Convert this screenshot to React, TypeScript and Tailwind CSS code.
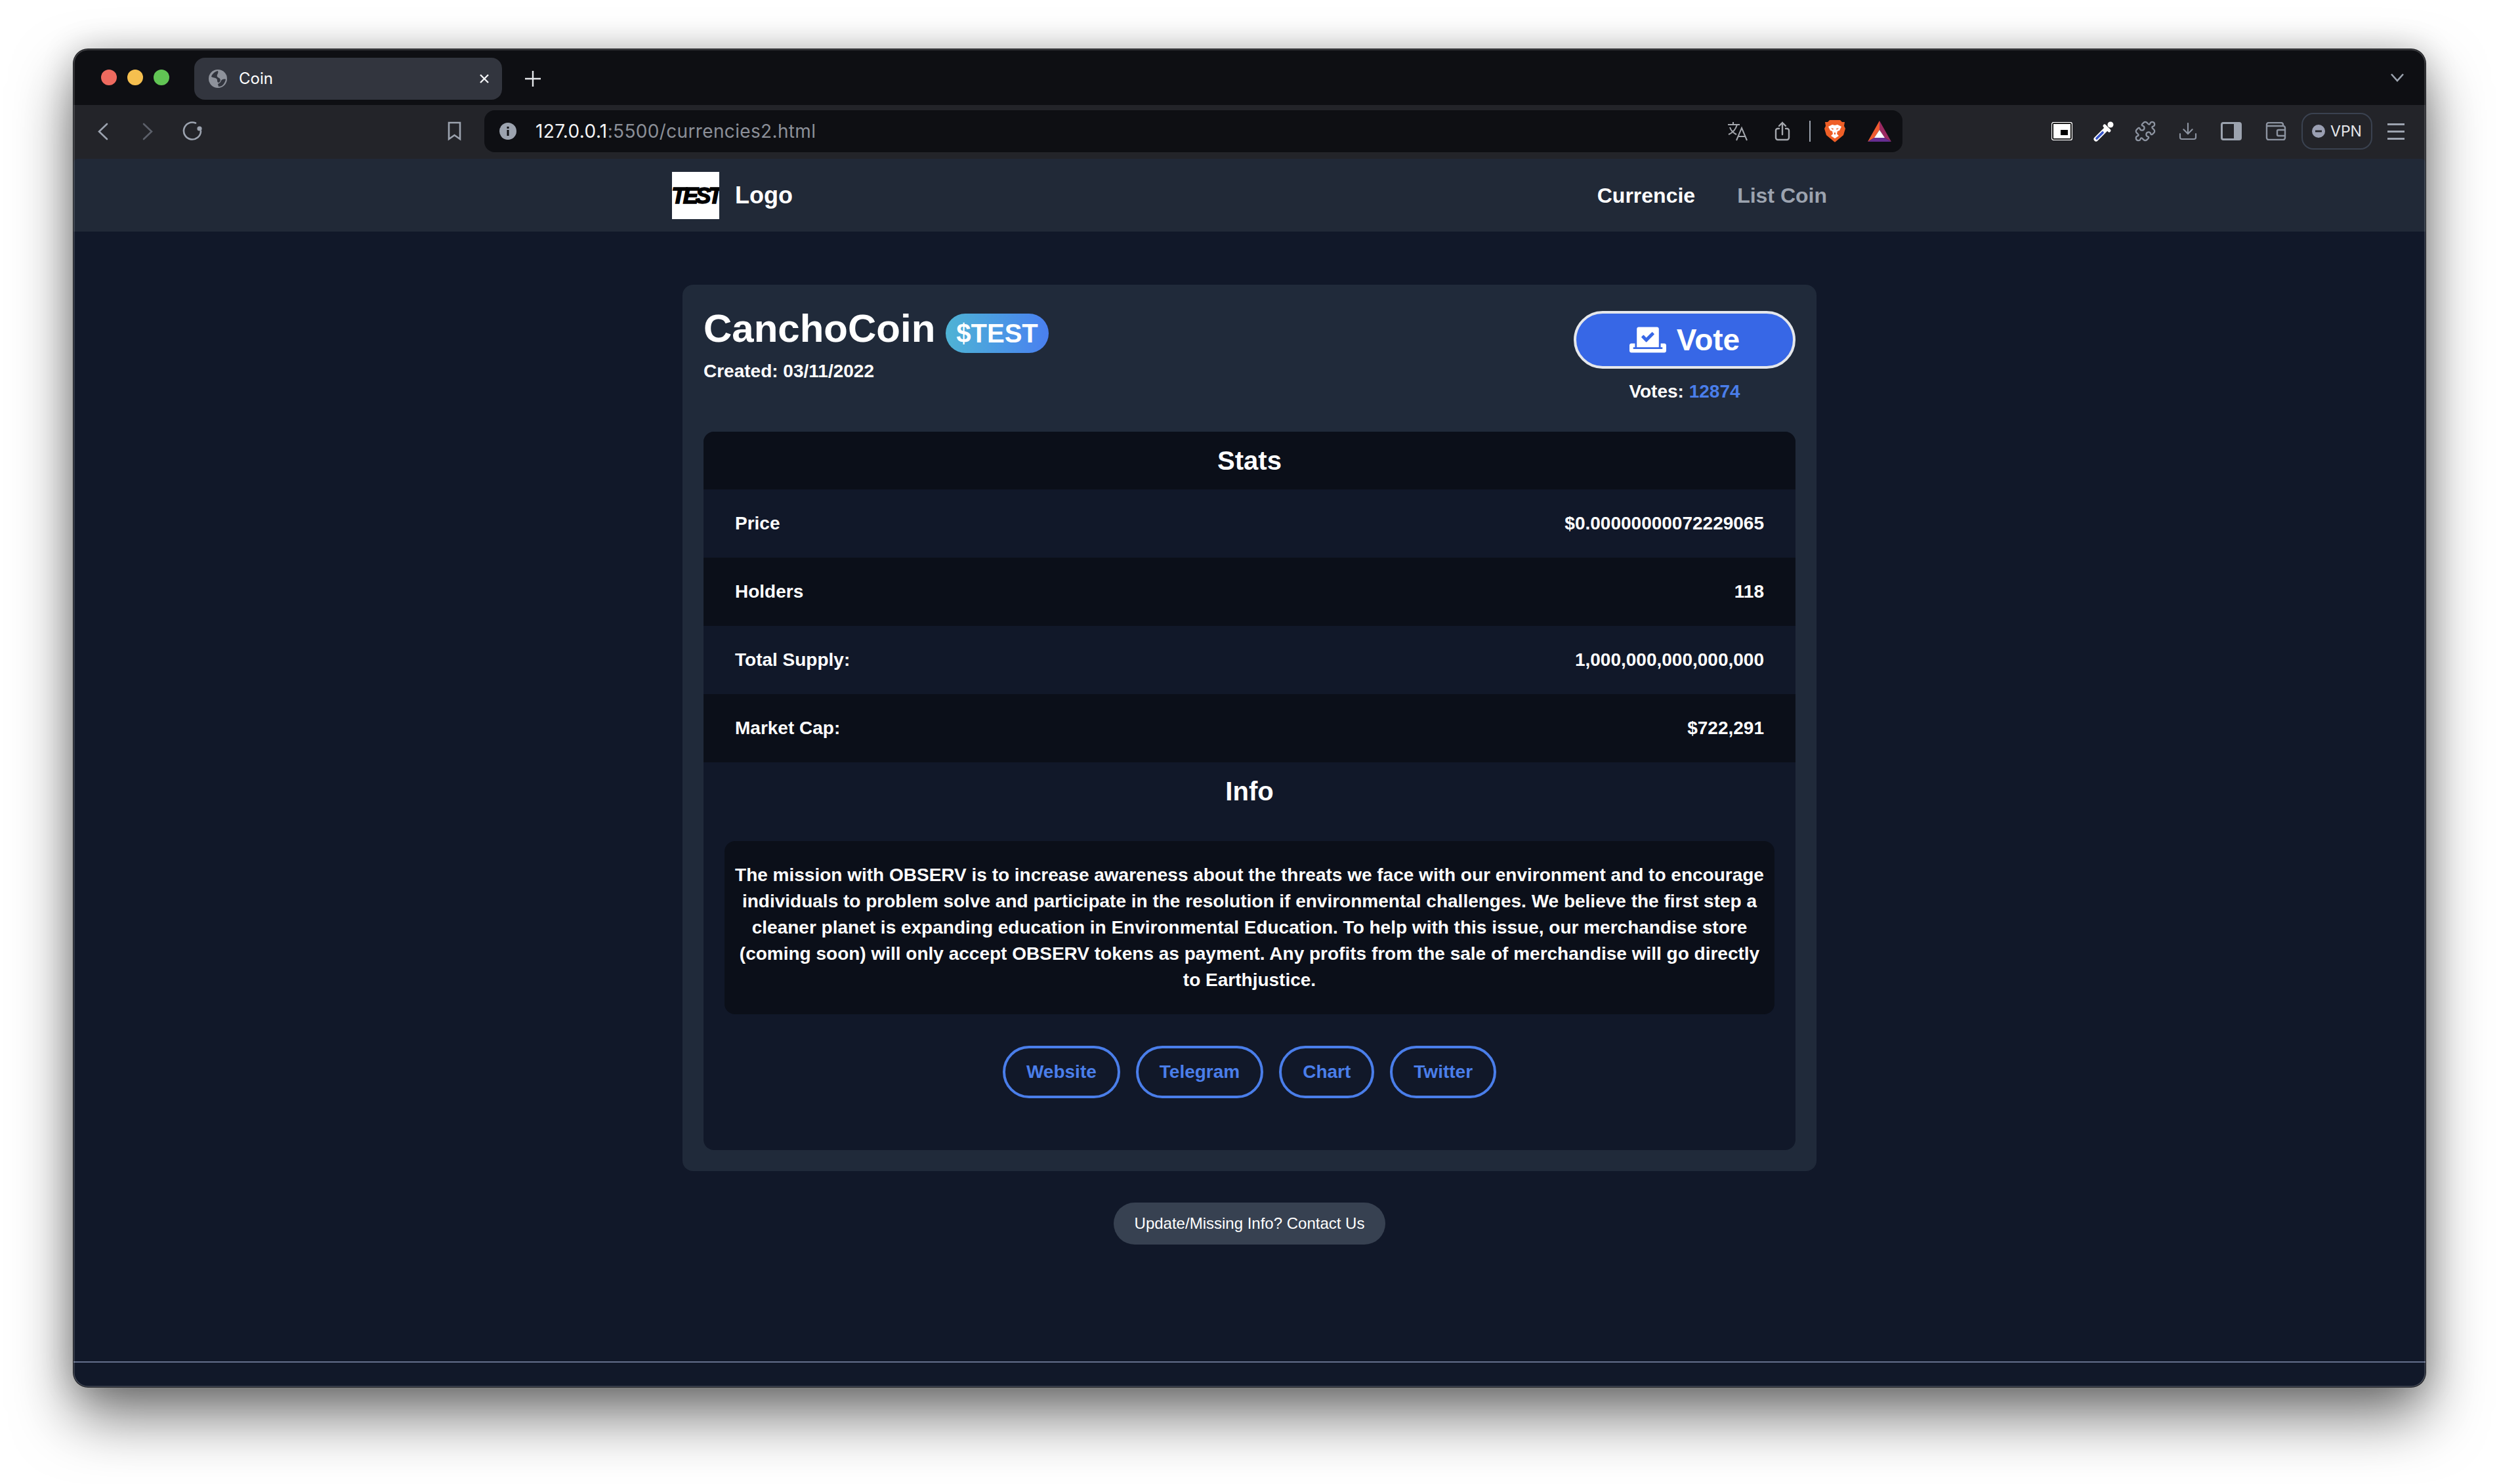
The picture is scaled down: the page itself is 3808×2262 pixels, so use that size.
import { Puzzle, Download } from 'lucide-react';
import { FaVoteYea } from 'react-icons/fa';

const stats = [
  { label: 'Price', value: '$0.00000000072229065', dark: false },
  { label: 'Holders', value: '118', dark: true },
  { label: 'Total Supply:', value: '1,000,000,000,000,000', dark: false },
  { label: 'Market Cap:', value: '$722,291', dark: true },
];

const links = ['Website', 'Telegram', 'Chart', 'Twitter'];

function TabBar() {
  return (
    <div className="flex h-[85px] shrink-0 items-center bg-[#0e0f13] pl-[42px] pr-[32px]">
      <div className="flex gap-4">
        <div className="h-6 w-6 rounded-full bg-[#ee6a5f]" />
        <div className="h-6 w-6 rounded-full bg-[#f5bf4f]" />
        <div className="h-6 w-6 rounded-full bg-[#61c554]" />
      </div>
      <div className="ml-[38px] mt-[5px] flex h-16 w-[469px] items-center rounded-2xl bg-[#32353e] pl-[22px] pr-[20px]">
        <svg width="28" height="28" viewBox="0 0 28 28">
          <circle cx="14" cy="14" r="14" fill="#8e929b" />
          <path d="M14 2c-5 1-9 5-10 9 3 2 6 1 8 3 2 2 0 5 3 6 3-1 4-5 1-7-2-1-4-2-3-5 1-2 2-4 1-6z" fill="#32353e" />
          <path d="M26 15c-3-1-6 0-7 2-1 3-3 4-5 5l1 4c5 0 9-3 11-11z" fill="#32353e" />
        </svg>
        <span className="ml-[18px] font-['Inter',sans-serif] text-2xl leading-none text-white">Coin</span>
        <svg className="ml-auto" width="14" height="14" viewBox="0 0 14 14" stroke="#f3f4f6" strokeWidth="2.4">
          <path d="M1 1l12 12M13 1L1 13" />
        </svg>
      </div>
      <svg className="ml-[35px] mt-1" width="24" height="24" viewBox="0 0 24 24" stroke="#e5e7eb" strokeWidth="2.4">
        <path d="M12 0v24M0 12h24" />
      </svg>
      <svg className="ml-auto" width="22" height="14" viewBox="0 0 22 14" fill="none" stroke="#9ca3af" strokeWidth="2.6">
        <path d="M2 2l9 10 9-10" />
      </svg>
    </div>
  );
}

function AddressBar() {
  return (
    <div className="ml-[35px] flex h-16 w-[2161px] items-center rounded-2xl bg-[#0e0f13] pl-[23px] pr-[17px]">
      <svg width="26" height="26" viewBox="0 0 26 26">
        <circle cx="13" cy="13" r="13" fill="#9ca3af" />
        <rect x="11.5" y="11" width="3" height="9" fill="#0e0f13" />
        <rect x="11.5" y="6" width="3" height="3" fill="#0e0f13" />
      </svg>
      <span className="ml-[29px] font-['Inter',sans-serif] text-[28px] leading-none tracking-[0.35px] text-[#8b8f98]">
        <span className="text-[#f3f4f6]">127.0.0.1</span>:5500/currencies2.html
      </span>
      <svg className="ml-auto" width="32" height="30" viewBox="0 0 32 30" fill="none" stroke="#a4a7ad" strokeWidth="2">
        <path d="M9 1v3M1 5h18M15 5c-2 7-6 12-13 15M4 9c2 6 6 9 10 11M14 29l8-19 8 19M17 23h10" />
      </svg>
      <svg className="ml-10" width="24" height="30" viewBox="0 0 24 30" fill="none" stroke="#a4a7ad" strokeWidth="2.4" strokeLinecap="round">
        <path d="M7 11H5a3 3 0 0 0-3 3v11a3 3 0 0 0 3 3h14a3 3 0 0 0 3-3V14a3 3 0 0 0-3-3h-2M12 20V2M7 7l5-5 5 5" />
      </svg>
      <div className="ml-[29px] h-8 w-0.5 bg-[#9ca3af]" />
      <svg className="ml-[21px]" width="32" height="36" viewBox="0 0 32 36">
        <path d="M8 1h16l3 3h4l-1 6 2 4-3 10-12 10q-1 1-2 0L3 24 0 14l2-4-1-6h4z" fill="#ef5f27" />
        <path d="M6 11l6-3 4 1 4-1 6 3-3 6-3 1-1 4 3 3-6 4-6-4 3-3-1-4-3-1z" fill="#fff" />
        <path d="M10 13l4 1-1 2zM22 13l-4 1 1 2zM15 20h2v3h-2z" fill="#ef5f27" />
      </svg>
      <svg className="ml-[34px]" width="36" height="32" viewBox="0 0 36 32">
        <path d="M18 0L0 32l10-6 8-12z" fill="#ef5a30" />
        <path d="M18 0l18 32-10-6-8-12z" fill="#9c2a62" />
        <path d="M0 32h36l-10-6H10z" fill="#662d91" />
        <path d="M18 14l8 12H10z" fill="#fff" />
      </svg>
    </div>
  );
}

function Toolbar() {
  return (
    <div className="flex h-[82px] shrink-0 items-center bg-[#232429] pb-[2px]">
      <svg className="ml-[37px]" width="16" height="27" viewBox="0 0 16 27" fill="none" stroke="#9ca3af" strokeWidth="2.6" strokeLinecap="round">
        <path d="M14 2L2 13.5 14 25" />
      </svg>
      <svg className="ml-[52px]" width="16" height="27" viewBox="0 0 16 27" fill="none" stroke="#5c606a" strokeWidth="2.6" strokeLinecap="round">
        <path d="M2 2l12 11.5L2 25" />
      </svg>
      <svg className="ml-[45px]" width="30" height="30" viewBox="0 0 30 30" fill="none" stroke="#9ca3af" strokeWidth="2.6" strokeLinecap="round">
        <path d="M20 2.5A13 13 0 1 0 28 15" />
        <circle cx="26" cy="11" r="3.6" fill="#9ca3af" stroke="none" />
      </svg>
      <svg className="ml-[374px]" width="21" height="30" viewBox="0 0 21 30" fill="none" stroke="#9ca3af" strokeWidth="2.6">
        <path d="M2 2h17v25l-8.5-6L2 27z" />
      </svg>
      <AddressBar />
      <svg className="ml-[227px]" width="32" height="28" viewBox="0 0 32 28">
        <rect x="0.5" y="0.5" width="31" height="27" rx="3" fill="#000" stroke="#fff" strokeWidth="1.4" />
        <rect x="3" y="3" width="26" height="22" fill="#fff" />
        <rect x="14" y="12" width="11" height="8" fill="#000" />
      </svg>
      <svg className="ml-8" width="32" height="32" viewBox="0 0 32 32" fill="none" strokeLinecap="round">
        <path d="M4 28L19 13" stroke="#fff" strokeWidth="7" />
        <path d="M5 27l9-9" stroke="#3554c9" strokeWidth="3.6" />
        <path d="M17 8l7 7" stroke="#fff" strokeWidth="5" />
        <circle cx="26" cy="6" r="4.5" fill="#fff" />
      </svg>
      <Puzzle className="ml-[30px]" size={34} color="#8d94a1" strokeWidth={1.6} />
      <Download className="ml-[32px]" size={32} color="#8d94a1" strokeWidth={1.6} />
      <svg className="ml-[34px]" width="32" height="28" viewBox="0 0 32 28">
        <rect x="1.5" y="1.5" width="29" height="25" rx="2.5" fill="#232429" stroke="#9ca3af" strokeWidth="3" />
        <rect x="20" y="1.5" width="10.5" height="25" fill="#9ca3af" />
      </svg>
      <svg className="ml-[36px]" width="32" height="28" viewBox="0 0 32 28" fill="none" stroke="#8d94a1" strokeWidth="2.4">
        <path d="M27 6V4a3 3 0 0 0-3-3H5a3 3 0 0 0-3 3v20a3 3 0 0 0 3 3h22a3 3 0 0 0 3-3V9a3 3 0 0 0-3-3H2" />
        <path d="M30 12H20a2 2 0 0 0-2 2v5a2 2 0 0 0 2 2h10" />
      </svg>
      <div className="ml-[23px] flex h-14 w-[108px] items-center justify-center gap-2 rounded-[18px] border-2 border-[#3a4250]">
        <svg width="20" height="20" viewBox="0 0 20 20">
          <circle cx="10" cy="10" r="10" fill="#9a9fb2" />
          <rect x="5" y="8.6" width="10" height="2.8" fill="#232429" />
        </svg>
        <span className="font-['Inter',sans-serif] text-[23px] leading-none text-[#e5e7eb]">VPN</span>
      </div>
      <div className="ml-5 flex w-8 flex-col items-center gap-[8px]">
        <div className="h-[3px] w-[26px] bg-[#9ca3af]" />
        <div className="h-[3px] w-[26px] bg-[#9ca3af]" />
        <div className="h-[3px] w-[26px] bg-[#9ca3af]" />
      </div>
    </div>
  );
}

function Nav() {
  return (
    <nav className="flex h-[111px] shrink-0 justify-center rounded-t-md bg-[#212937]">
      <div className="flex w-[1760px] items-center justify-between">
        <div className="flex items-center gap-6">
          <div className="flex h-[72px] w-[72px] items-center justify-center overflow-hidden bg-white">
            <span className="text-[35px] font-bold italic leading-none tracking-[-4px] text-black [-webkit-text-stroke:1.6px_black]">TEST</span>
          </div>
          <span className="text-4xl font-bold text-white">Logo</span>
        </div>
        <div className="flex items-center gap-16 text-[32px] font-bold">
          <a className="text-white">Currencie</a>
          <a className="text-[#9ca3af]">List Coin</a>
        </div>
      </div>
    </nav>
  );
}

function CoinCard() {
  return (
    <div className="w-[1728px] rounded-2xl bg-[#202a3a] p-8 text-white">
      <div className="flex h-[192px] items-start justify-between">
        <div>
          <div className="flex h-[72px] items-start gap-4">
            <h1 className="mt-[3px] text-[60px] font-bold leading-[64px]">CanchoCoin</h1>
            <span className="mt-[12px] flex h-[60px] items-center rounded-[30px] bg-gradient-to-r from-[#4fb3d4] to-[#4a7ff0] px-4 text-[40px] font-bold">$TEST</span>
          </div>
          <p className="mt-[8px] text-[28px] font-bold leading-10">Created: 03/11/2022</p>
        </div>
        <div className="mt-2 flex w-[338px] flex-col items-center">
          <button className="flex h-[88px] w-full items-center justify-center gap-4 rounded-[44px] border-4 border-[#e5e7eb] bg-[#3767e6] text-[46px] font-bold text-white">
            <FaVoteYea size={56} />
            <span>Vote</span>
          </button>
          <p className="mt-[15px] text-[28px] font-bold leading-10">
            Votes: <span className="text-[#4a7eea]">12874</span>
          </p>
        </div>
      </div>

      <div className="rounded-2xl bg-[#111829]">
        <h2 className="flex h-[88px] items-center justify-center rounded-t-2xl bg-[#0b0f19] text-[40px] font-bold">Stats</h2>
        {stats.map((s) => (
          <div key={s.label} className={`flex h-[104px] items-center justify-between px-12 text-[28px] font-bold ${s.dark ? 'bg-[#0b0f19]' : ''}`}>
            <span>{s.label}</span>
            <span>{s.value}</span>
          </div>
        ))}
        <h2 className="pt-4 text-center text-[40px] font-bold leading-[56px]">Info</h2>
        <div className="px-8 pb-[79px] pt-12">
          <p className="rounded-2xl bg-[#0b0f19] px-4 py-8 text-center text-[28px] font-bold leading-10">
            The mission with OBSERV is to increase awareness about the threats we face with our environment and to encourage individuals to problem solve and participate in the resolution if environmental challenges. We believe the first step a cleaner planet is expanding education in Environmental Education. To help with this issue, our merchandise store (coming soon) will only accept OBSERV tokens as payment. Any profits from the sale of merchandise will go directly to Earthjustice.
          </p>
          <div className="mt-12 flex justify-center gap-6">
            {links.map((l) => (
              <a key={l} className="flex h-20 items-center rounded-[40px] border-4 border-[#4a7eea] px-8 text-[28px] font-bold text-[#4a7eea]">
                {l}
              </a>
            ))}
          </div>
        </div>
      </div>
    </div>
  );
}

export default function App() {
  return (
    <div className="h-[2262px] w-[3808px] overflow-hidden bg-white pl-[112px] pt-[75px] font-['Liberation_Sans',Arial,sans-serif]">
      <div className="relative flex h-[2039px] w-[3584px] flex-col rounded-[22px] bg-[#232429] shadow-[0_0_0_1px_#17181c,0_44px_90px_rgba(0,0,0,0.55),0_0_50px_rgba(0,0,0,0.2)]">
        <div className="overflow-hidden rounded-t-[22px]">
          <TabBar />
        </div>
        <Toolbar />
        <Nav />
        <main className="flex flex-1 flex-col items-center bg-[#111829] pt-[81px]">
          <CoinCard />
          <a className="mt-12 flex h-16 items-center rounded-[32px] bg-[#374151] px-8 text-2xl text-white">
            Update/Missing Info? Contact Us
          </a>
        </main>
        <footer className="h-[39px] shrink-0 rounded-b-[22px] border-t-2 border-[#64708c] bg-[#111829]" />
        <div className="pointer-events-none absolute inset-0 rounded-[22px] shadow-[inset_0_0_0_1.5px_rgba(255,255,255,0.22)]" />
      </div>
    </div>
  );
}
